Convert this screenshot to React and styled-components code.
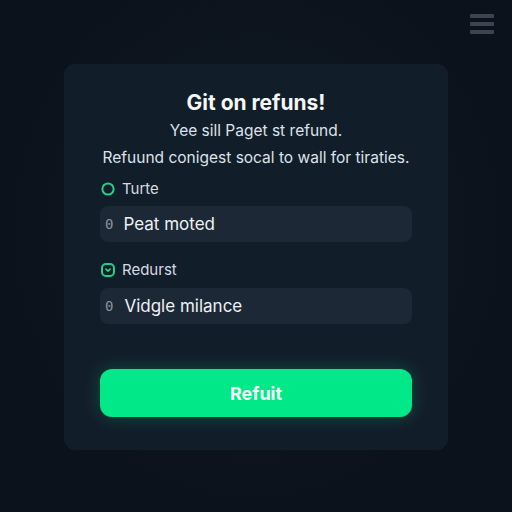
import styled, { createGlobalStyle } from 'styled-components'

const Global = createGlobalStyle`
  html, body {
    margin: 0;
    padding: 0;
    background: #0b121b;
  }
  body {
    font-family: Inter, "Noto Sans", sans-serif;
  }
`

const Page = styled.div`
  width: 512px;
  height: 512px;
  box-sizing: border-box;
  position: relative;
  background: radial-gradient(ellipse at 50% 45%, #0f1923 0%, #0b121b 70%);
  padding: 64px 64px 0 64px;
`

const Menu = styled.button`
  position: absolute;
  top: 14px;
  right: 18px;
  width: 24px;
  padding: 0;
  border: 0;
  background: none;
  display: flex;
  flex-direction: column;
  gap: 4px;
  span {
    display: block;
    height: 4px;
    border-radius: 1px;
    background: #3b4450;
  }
`

const Card = styled.div`
  width: 384px;
  height: 386px;
  box-sizing: border-box;
  background: #121d2a;
  border-radius: 11px;
  padding: 27px 36px 0 36px;
  display: flex;
  flex-direction: column;
`

const Title = styled.h1`
  margin: 0;
  text-align: center;
  color: #f4f6f8;
  font-size: 21px;
  font-weight: 700;
  line-height: 24px;
`

const Sub = styled.p`
  margin: 6px 0 0;
  text-align: center;
  color: #dde2e8;
  font-size: 15.5px;
  line-height: 20px;
`

const Desc = styled.p`
  margin: 7px -4px 0;
  text-align: center;
  color: #dde2e8;
  font-size: 15.5px;
  line-height: 20px;
  white-space: nowrap;
`

const Label = styled.div`
  display: flex;
  align-items: center;
  gap: 7px;
  margin-top: ${p => p.$top}px;
  margin-left: 1px;
  color: #d6dbe1;
  font-size: 15px;
  line-height: 20px;
`

const Field = styled.div`
  margin-top: ${p => p.$top}px;
  height: 36px;
  border-radius: 8px;
  background: #1d2836;
  display: flex;
  align-items: center;
  padding-left: 3px;
  gap: ${p => p.$gap}px;
  color: #eef1f4;
  font-size: 17px;
`

const Zero = styled.span`
  color: #8a94a0;
  font-size: 14px;
  font-family: "DejaVu Sans Mono", monospace;
  margin-left: 2px;
`

const Button = styled.button`
  margin-top: 45px;
  height: 48px;
  border: 0;
  border-radius: 12px;
  background: #00e887;
  color: #f3fff9;
  font-family: Inter, sans-serif;
  font-size: 18px;
  font-weight: 700;
  box-shadow: 0 0 18px rgba(0, 232, 135, 0.25);
`

const Ring = () => (
  <svg width="14" height="14" viewBox="0 0 14 14">
    <circle cx="7" cy="7" r="5.6" fill="none" stroke="#1fcf8a" strokeWidth="2" />
  </svg>
)

const Drop = () => (
  <svg width="14" height="14" viewBox="0 0 14 14">
    <rect x="1" y="1" width="12" height="12" rx="4" fill="none" stroke="#1fcf8a" strokeWidth="2" />
    <path d="M5 6.2 L7 8.2 L9 6.2" fill="none" stroke="#1fcf8a" strokeWidth="1.8" strokeLinecap="round" strokeLinejoin="round" />
  </svg>
)

export default function App() {
  return (
    <Page>
      <Global />
      <Menu aria-label="menu">
        <span />
        <span />
        <span />
      </Menu>
      <Card>
        <Title>Git on refuns!</Title>
        <Sub>Yee sill Paget st refund.</Sub>
        <Desc>Refuund conigest socal to wall for tiraties.</Desc>
        <Label $top={11}><Ring />Turte</Label>
        <Field $top={7} $gap={10}><Zero>0</Zero>Peat moted</Field>
        <Label $top={18}><Drop />Redurst</Label>
        <Field $top={8} $gap={11}><Zero>0</Zero>Vidgle milance</Field>
        <Button>Refuit</Button>
      </Card>
    </Page>
  )
}
